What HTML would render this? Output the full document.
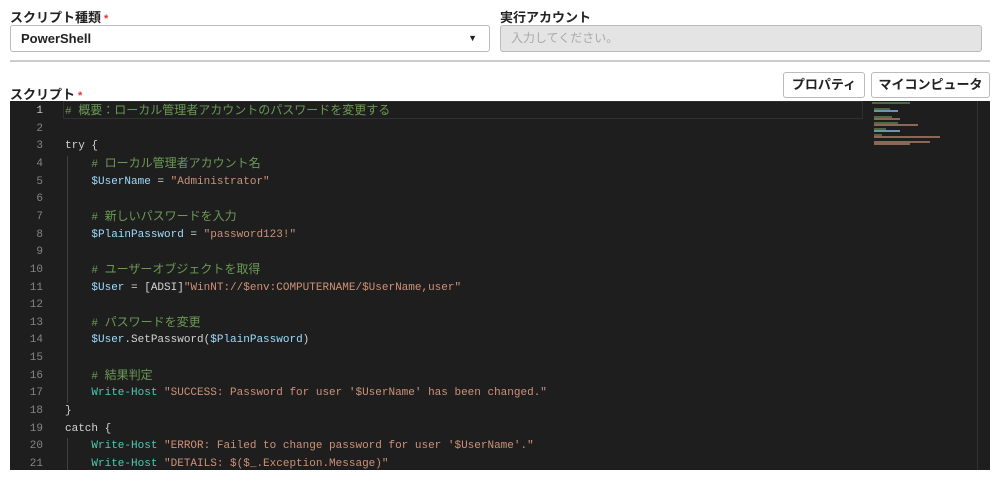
<!DOCTYPE html>
<html><head><meta charset="utf-8"><style>
body{margin:0;width:1000px;height:479px;background:#fff;font-family:"Liberation Sans","Noto Sans CJK JP",sans-serif;position:relative;overflow:hidden}
.lbl{position:absolute;font-size:13px;font-weight:bold;color:#222}
.req{color:#e03030;font-size:11px;margin-left:3px}
.box{position:absolute;top:25px;height:27px;border:1px solid #bbb;border-radius:3px;box-sizing:border-box}
.btn{position:absolute;top:72px;height:26px;border:1px solid #bbb;border-radius:3px;box-sizing:border-box;font-size:13px;font-weight:bold;text-align:center;line-height:24px;background:#fff;color:#222}
#ed{position:absolute;left:10px;top:101px;width:980px;height:369px;background:#1e1e1e;overflow:hidden;font-family:"Liberation Mono","Noto Sans CJK JP",monospace;font-size:11px}
#in{position:absolute;left:0;top:2px;width:980px;height:369px}
.ln{position:absolute;left:0;width:33px;text-align:right;color:#858585;height:17.65px;line-height:17.65px}
.cd{position:absolute;left:55px;white-space:pre;color:#d4d4d4;height:17.65px;line-height:17.65px}
.c{color:#6a9955}.j{font-size:12px}.v{color:#9cdcfe}.s{color:#ce9178}.f{color:#4ec9b0}
</style></head><body>
<div class="lbl" style="left:10px;top:7px">スクリプト種類<span class="req">*</span></div>
<div class="lbl" style="left:500px;top:7px">実行アカウント</div>
<div class="box" style="left:10px;width:480px;font-size:13px;font-weight:bold;color:#222;padding-left:10px;line-height:25px">PowerShell<span style="position:absolute;right:12px;top:0;font-size:9px">▼</span></div>
<div class="box" style="left:500px;width:482px;background:#e4e4e4;font-size:12px;color:#aaa;padding-left:10px;line-height:25px">入力してください。</div>
<div style="position:absolute;left:10px;top:60px;width:980px;height:2px;background:#ccc"></div>
<div class="lbl" style="left:10px;top:84px">スクリプト<span class="req">*</span></div>
<div class="btn" style="left:783px;width:82px">プロパティ</div>
<div class="btn" style="left:871px;width:119px">マイコンピュータ</div>
<div id="ed">
<div style="position:absolute;left:53px;top:0;width:800px;height:18px;border:1px solid #303030;box-sizing:border-box"></div>
<div style="position:absolute;left:967px;top:0;width:1px;height:369px;background:#333"></div>
<div style="position:absolute;left:57px;top:55px;width:1px;height:247px;background:#404040"></div>
<div style="position:absolute;left:57px;top:337px;width:1px;height:32px;background:#404040"></div>
<svg style="position:absolute;left:860px;top:0" width="80" height="50">
<g stroke-width="1.2">
<line x1="2" y1="2" x2="40" y2="2" stroke="#6a9955"/>
<line x1="4" y1="8" x2="20" y2="8" stroke="#6a9955"/>
<line x1="4" y1="10" x2="28" y2="10" stroke="#9cdcfe"/>
<line x1="4" y1="16" x2="22" y2="16" stroke="#6a9955"/>
<line x1="4" y1="18" x2="30" y2="18" stroke="#ce9178"/>
<line x1="4" y1="22" x2="28" y2="22" stroke="#6a9955"/>
<line x1="4" y1="24" x2="48" y2="24" stroke="#ce9178"/>
<line x1="4" y1="28" x2="16" y2="28" stroke="#6a9955"/>
<line x1="4" y1="30" x2="30" y2="30" stroke="#9cdcfe"/>
<line x1="4" y1="34" x2="12" y2="34" stroke="#6a9955"/>
<line x1="4" y1="36" x2="70" y2="36" stroke="#ce9178"/>
<line x1="4" y1="41" x2="60" y2="41" stroke="#ce9178"/>
<line x1="4" y1="43" x2="40" y2="43" stroke="#ce9178"/>
</g></svg>
<div id="in">
<div class="ln" style="top:0;color:#c6c6c6">1</div><div class="cd c" style="top:0"># <span class="j">概要：ローカル管理者アカウントのパスワードを変更する</span></div>
<div class="ln" style="top:17.65px">2</div>
<div class="ln" style="top:35.3px">3</div><div class="cd" style="top:35.3px">try {</div>
<div class="ln" style="top:52.95px">4</div><div class="cd c" style="top:52.95px">    # <span class="j">ローカル管理者アカウント名</span></div>
<div class="ln" style="top:70.6px">5</div><div class="cd" style="top:70.6px">    <span class="v">$UserName</span> = <span class="s">"Administrator"</span></div>
<div class="ln" style="top:88.25px">6</div>
<div class="ln" style="top:105.9px">7</div><div class="cd c" style="top:105.9px">    # <span class="j">新しいパスワードを入力</span></div>
<div class="ln" style="top:123.55px">8</div><div class="cd" style="top:123.55px">    <span class="v">$PlainPassword</span> = <span class="s">"password123!"</span></div>
<div class="ln" style="top:141.2px">9</div>
<div class="ln" style="top:158.85px">10</div><div class="cd c" style="top:158.85px">    # <span class="j">ユーザーオブジェクトを取得</span></div>
<div class="ln" style="top:176.5px">11</div><div class="cd" style="top:176.5px">    <span class="v">$User</span> = [ADSI]<span class="s">"WinNT://$env:COMPUTERNAME/$UserName,user"</span></div>
<div class="ln" style="top:194.15px">12</div>
<div class="ln" style="top:211.8px">13</div><div class="cd c" style="top:211.8px">    # <span class="j">パスワードを変更</span></div>
<div class="ln" style="top:229.45px">14</div><div class="cd" style="top:229.45px">    <span class="v">$User</span>.SetPassword(<span class="v">$PlainPassword</span>)</div>
<div class="ln" style="top:247.1px">15</div>
<div class="ln" style="top:264.75px">16</div><div class="cd c" style="top:264.75px">    # <span class="j">結果判定</span></div>
<div class="ln" style="top:282.4px">17</div><div class="cd" style="top:282.4px">    <span class="f">Write-Host</span> <span class="s">"SUCCESS: Password for user '$UserName' has been changed."</span></div>
<div class="ln" style="top:300.05px">18</div><div class="cd" style="top:300.05px">}</div>
<div class="ln" style="top:317.7px">19</div><div class="cd" style="top:317.7px">catch {</div>
<div class="ln" style="top:335.35px">20</div><div class="cd" style="top:335.35px">    <span class="f">Write-Host</span> <span class="s">"ERROR: Failed to change password for user '$UserName'."</span></div>
<div class="ln" style="top:353px">21</div><div class="cd" style="top:353px">    <span class="f">Write-Host</span> <span class="s">"DETAILS: $($_.Exception.Message)"</span></div>
</div>
</div>
</body></html>
